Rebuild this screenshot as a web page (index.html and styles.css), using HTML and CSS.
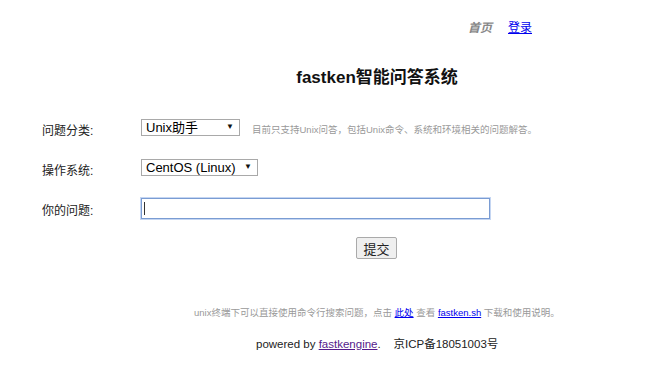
FILE: index.html
```html
<!DOCTYPE html>
<html>
<head>
<meta charset="utf-8">
<link rel="stylesheet" href="styles.css">
</head>
<body>
<div class="nav">
  <span class="nav-home">首页</span>
  <a class="nav-link" href="#">登录</a>
</div>
<h1 class="title">fastken智能问答系统</h1>
<form class="form">
  <div class="row">
    <label class="label">问题分类:</label>
    <div class="sel sel-cat"><span class="sel-text">Unix助手</span><span class="sel-arrow">▼</span></div>
    <span class="hint">目前只支持Unix问答，包括Unix命令、系统和环境相关的问题解答。</span>
  </div>
  <div class="row">
    <label class="label">操作系统:</label>
    <div class="sel sel-os"><span class="sel-text">CentOS (Linux)</span><span class="sel-arrow">▼</span></div>
  </div>
  <div class="row">
    <label class="label">你的问题:</label>
    <div class="question"><span class="caret"></span></div>
  </div>
  <div class="submit-row">
    <button class="submit" type="button">提交</button>
  </div>
</form>
<p class="tip">unix终端下可以直接使用命令行搜索问题，点击 <a href="#">此处</a> 查看 <a href="#">fastken.sh</a> 下载和使用说明。</p>
<p class="footer">powered by <a class="visited" href="#">fastkengine</a>.&nbsp;&nbsp;&nbsp; 京ICP备18051003号</p>
</body>
</html>
```
FILE: styles.css
```css
html, body {
  margin: 0;
  padding: 0;
  background: #fff;
}
body {
  font-family: "Liberation Sans", "Noto Sans CJK SC", sans-serif;
  color: #222;
  font-size: 12px;
}
.nav {
  display: flex;
  justify-content: flex-end;
  gap: 16px;
  padding: 20px 138px 0 0;
  font-size: 12px;
  line-height: 16px;
}
.nav-home {
  color: #888;
  font-style: italic;
  font-weight: bold;
}
.nav-link {
  color: #00e;
}
.title {
  margin: 32px 0 0 0;
  padding-left: 84px;
  text-align: center;
  font-size: 17px;
  line-height: 20px;
  font-weight: bold;
  color: #111;
}
.form {
  margin: 20px 0 0 42px;
}
.row {
  display: flex;
  align-items: center;
  height: 40px;
}
.label {
  width: 99px;
  font-size: 12px;
  padding-top: 3px;
}
.sel {
  box-sizing: border-box;
  display: flex;
  align-items: center;
  justify-content: space-between;
  height: 17px;
  padding: 0 5px 0 4px;
  border: 1px solid #a9a9a9;
  background: #fff;
  color: #000;
  margin-top: -2px;
}
.sel-text {
  font-family: "Liberation Sans", "Noto Sans CJK SC", sans-serif;
  font-size: 13px;
  line-height: 15px;
}
.sel-arrow {
  font-size: 8px;
  line-height: 8px;
  color: #111;
}
.sel-cat { width: 99px; }
.sel-os { width: 117px; }
.hint {
  margin-left: 12px;
  font-size: 9.5px;
  color: #999;
  padding-top: 2px;
}
.question {
  box-sizing: border-box;
  width: 349px;
  height: 21px;
  border: 1px solid #7a9cd3;
  box-shadow: 0 0 0 1px #c5d6f2;
  display: flex;
  align-items: center;
  padding-left: 2px;
}
.caret {
  display: block;
  width: 1px;
  height: 13px;
  background: #333;
}
.submit-row {
  padding: 9px 0 0 314px;
}
.submit {
  font-family: "Noto Sans CJK SC", sans-serif;
  font-size: 13px;
  height: 22px;
  width: 41px;
  padding: 0;
  border: 1px solid #aaa;
  background: #efefef;
  border-radius: 2px;
  color: #222;
}
.tip {
  margin: 46px 0 0 194px;
  font-size: 9.5px;
  color: #999;
}
.tip a { color: #00e; }
.footer {
  margin: 16px 0 0 256px;
  font-size: 11.5px;
  color: #222;
}
.footer a.visited { color: #551a8b; }
```
